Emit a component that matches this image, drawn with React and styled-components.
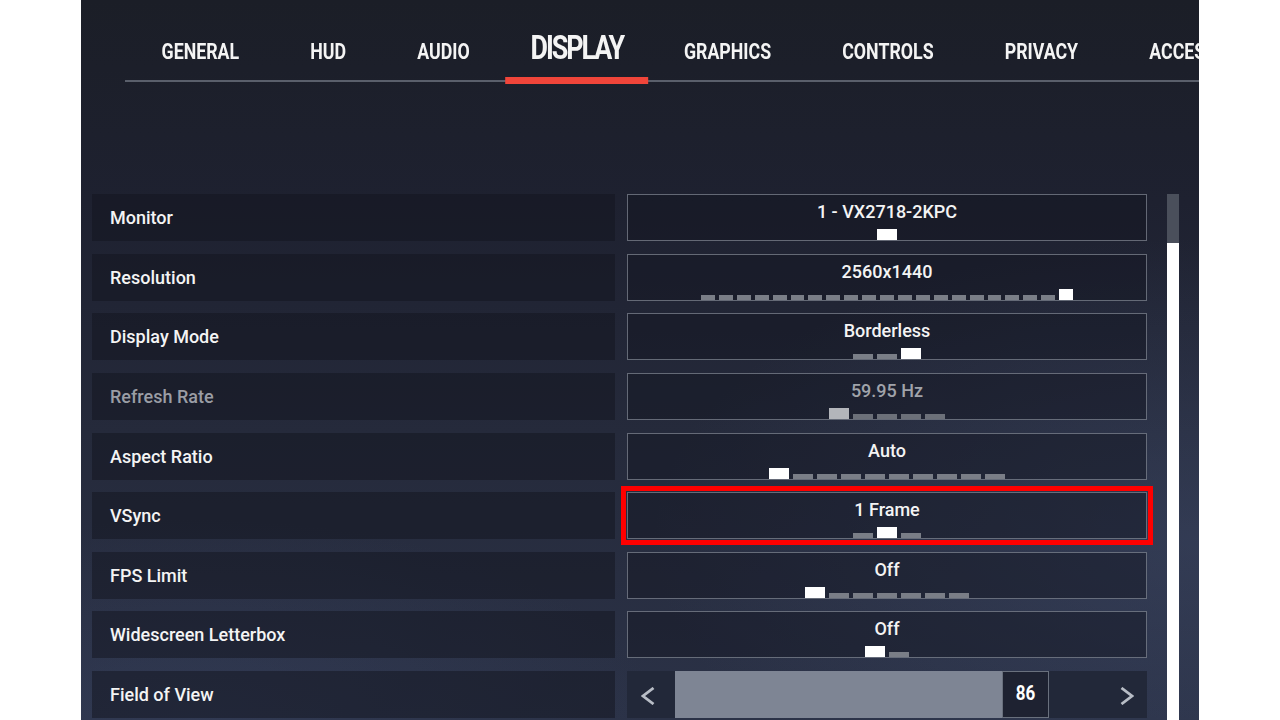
import React from "react";
import styled, { createGlobalStyle, css } from "styled-components";

const GlobalStyle = createGlobalStyle`
  html, body {
    margin: 0;
    padding: 0;
    background: #ffffff;
  }
  body {
    font-family: Roboto, "Liberation Sans", sans-serif;
    -webkit-font-smoothing: antialiased;
  }
`;

const Page = styled.div`
  width: 1280px;
  height: 720px;
  display: flex;
  justify-content: center;
  background: #ffffff;
`;

const Panel = styled.div`
  width: 1118px;
  height: 720px;
  overflow: hidden;
  display: flex;
  flex-direction: column;
  background:
    radial-gradient(ellipse 70% 60% at 100% 75%, rgba(72, 86, 122, 0.35), transparent 70%),
    radial-gradient(ellipse 60% 40% at 10% 100%, rgba(60, 72, 105, 0.35), transparent 70%),
    linear-gradient(180deg, #1b1e27 0%, #1e2130 28%, #252a3b 60%, #2b3247 100%);
`;

const Header = styled.header`
  display: flex;
  flex-direction: column;
  height: 194px;
  flex: none;
`;

/* Tab captions are drawn in a bold face squeezed horizontally */
const TabRow = styled.nav`
  display: flex;
  align-items: baseline;
  margin: 30px 0 0 45px;
  white-space: nowrap;
  transform: scaleX(0.79);
  transform-origin: left center;
`;

const Tab = styled.div`
  position: relative;
  padding: 0 45px;
  font-family: Roboto, "Liberation Sans", sans-serif;
  font-weight: 700;
  font-size: 22.5px;
  line-height: 1;
  color: #f4f4f4;
  text-transform: uppercase;

  ${({ $active }) =>
    $active &&
    css`
      padding: 0 32px;
      font-size: 34px;
      letter-spacing: -2.6px;
      &::after {
        content: "";
        position: absolute;
        left: 0;
        right: 0;
        top: 47px;
        height: 7px;
        background: #f0453a;
      }
    `}
`;

const Rule = styled.div`
  height: 2px;
  margin: 16px 0 0 44px;
  background: #5a5f6b;
`;

const Body = styled.div`
  flex: 1;
  display: flex;
  padding-left: 11px;
  min-height: 0;
`;

const SettingsGrid = styled.div`
  display: grid;
  grid-template-columns: 523px 520px;
  grid-auto-rows: 47px;
  column-gap: 12px;
  row-gap: 12.625px;
  align-content: start;
`;

const Label = styled.div`
  display: flex;
  align-items: center;
  padding-left: 18px;
  background: rgba(18, 20, 30, 0.5);
  font-size: 18px;
  font-weight: 500;
  color: ${({ $disabled }) => ($disabled ? "#9a9da5" : "#f4f4f4")};
`;

const ValueBox = styled.div`
  box-sizing: border-box;
  display: flex;
  flex-direction: column;
  align-items: center;
  padding-top: 7px;
  border: 1px solid rgba(150, 156, 168, 0.6);
  background: rgba(18, 20, 30, 0.45);
  ${({ $highlighted }) =>
    $highlighted &&
    css`
      outline: 5px solid #ff0000;
      outline-offset: 1px;
    `}
`;

const ValueText = styled.div`
  font-size: 18px;
  font-weight: 500;
  line-height: 20px;
  color: ${({ $disabled }) => ($disabled ? "#a0a3aa" : "#f4f4f4")};
`;

const Steps = styled.div`
  margin-top: auto;
  display: flex;
  align-items: flex-end;
  gap: 4px;
  max-width: 372px;
`;

const Step = styled.span`
  width: 20px;
  flex: 0 1 auto;
  min-width: 0;
  height: ${({ $on }) => ($on ? "11px" : "5px")};
  background: ${({ $on, $disabled }) =>
    $on ? ($disabled ? "#b3b5ba" : "#ffffff") : $disabled ? "#6c7079" : "#7a7e87"};
`;

const SliderBox = styled.div`
  display: flex;
  background: #222839;
`;

const ArrowButton = styled.div`
  width: 48px;
  flex: none;
  display: flex;
  align-items: center;
  justify-content: ${({ $side }) => ($side === "left" ? "flex-start" : "flex-end")};
  padding: ${({ $side }) => ($side === "left" ? "2px 0 0 14px" : "2px 13px 0 0")};
  box-sizing: border-box;
`;

const Track = styled.div`
  flex: 1;
  display: flex;
`;

const Fill = styled.div`
  background: #7e8594;
`;

const SliderValue = styled.div`
  width: 47px;
  box-sizing: border-box;
  border: 1px solid #69707d;
  background: #1e2231;
  display: flex;
  align-items: center;
  justify-content: center;
  padding-bottom: 4px;
`;

const SliderNumber = styled.span`
  display: inline-block;
  font-weight: 700;
  font-size: 20px;
  color: #ffffff;
  transform: scaleX(0.85);
`;

const Scrollbar = styled.div`
  width: 12px;
  margin-left: 20px;
  display: flex;
  flex-direction: column;
`;

const ScrollTrack = styled.div`
  height: 49px;
  background: #4a4f5b;
`;

const ScrollThumb = styled.div`
  flex: 1;
  background: #ffffff;
`;

const Chevron = ({ dir }) => (
  <svg width="14" height="18" viewBox="0 0 14 18" aria-hidden="true">
    <polyline
      points={dir === "left" ? "12.5,1 2,9 12.5,17" : "1.5,1 12,9 1.5,17"}
      fill="none"
      stroke="#b8bdc6"
      strokeWidth="2.8"
      strokeLinejoin="miter"
    />
  </svg>
);

const tabs = ["General", "HUD", "Audio", "Display", "Graphics", "Controls", "Privacy", "Accessibility"];

const settings = [
  { label: "Monitor", value: "1 - VX2718-2KPC", count: 1, selected: 0 },
  { label: "Resolution", value: "2560x1440", count: 21, selected: 20 },
  { label: "Display Mode", value: "Borderless", count: 3, selected: 2 },
  { label: "Refresh Rate", value: "59.95 Hz", count: 5, selected: 0, disabled: true },
  { label: "Aspect Ratio", value: "Auto", count: 10, selected: 0 },
  { label: "VSync", value: "1 Frame", count: 3, selected: 1, highlighted: true },
  { label: "FPS Limit", value: "Off", count: 7, selected: 0 },
  { label: "Widescreen Letterbox", value: "Off", count: 2, selected: 0 },
];

export default function App() {
  return (
    <>
      <GlobalStyle />
      <Page>
        <Panel>
          <Header>
            <TabRow>
              {tabs.map((t) => (
                <Tab key={t} $active={t === "Display"}>
                  {t}
                </Tab>
              ))}
            </TabRow>
            <Rule />
          </Header>
          <Body>
            <SettingsGrid>
              {settings.map((s) => (
                <React.Fragment key={s.label}>
                  <Label $disabled={s.disabled}>{s.label}</Label>
                  <ValueBox $highlighted={s.highlighted}>
                    <ValueText $disabled={s.disabled}>{s.value}</ValueText>
                    <Steps>
                      {Array.from({ length: s.count }, (_, i) => (
                        <Step key={i} $on={i === s.selected} $disabled={s.disabled} />
                      ))}
                    </Steps>
                  </ValueBox>
                </React.Fragment>
              ))}
              <Label>Field of View</Label>
              <SliderBox>
                <ArrowButton $side="left">
                  <Chevron dir="left" />
                </ArrowButton>
                <Track>
                  <Fill style={{ width: "327px" }} />
                  <SliderValue>
                    <SliderNumber>86</SliderNumber>
                  </SliderValue>
                </Track>
                <ArrowButton $side="right">
                  <Chevron dir="right" />
                </ArrowButton>
              </SliderBox>
            </SettingsGrid>
            <Scrollbar>
              <ScrollTrack />
              <ScrollThumb />
            </Scrollbar>
          </Body>
        </Panel>
      </Page>
    </>
  );
}
